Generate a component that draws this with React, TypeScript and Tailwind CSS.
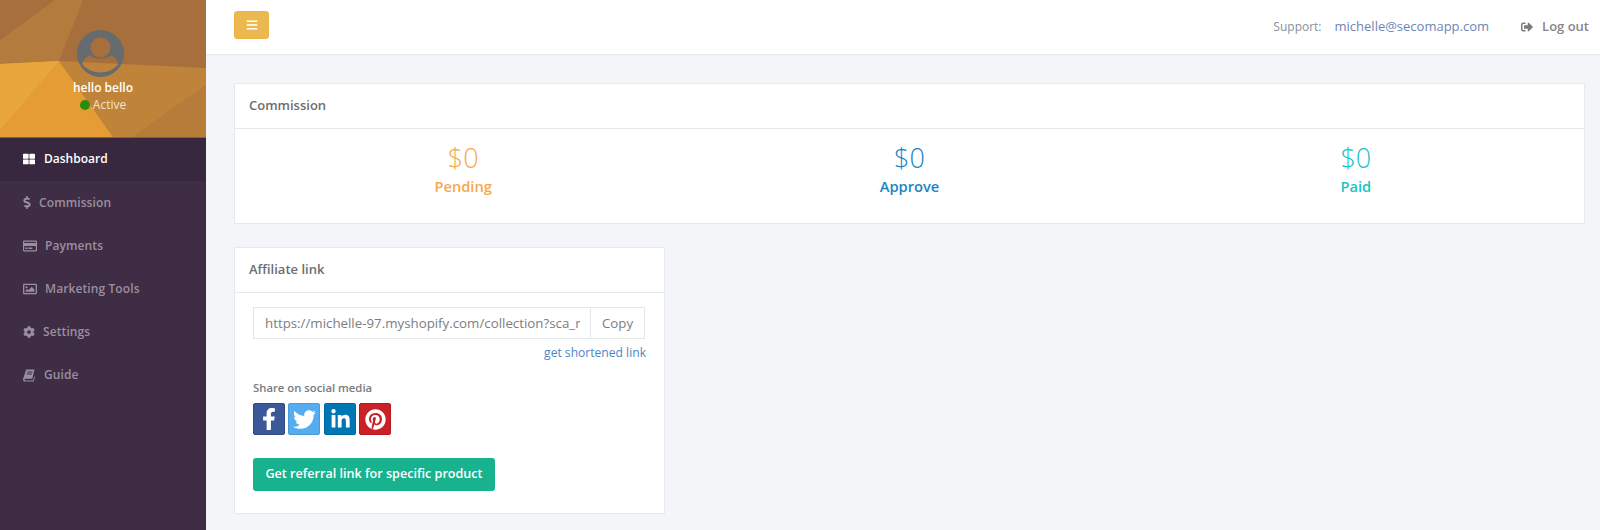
import { FaBars, FaCog, FaDollarSign, FaFacebookF, FaLinkedinIn, FaPinterest, FaRegCreditCard, FaRegImage, FaSignOutAlt, FaThLarge, FaTwitter } from 'react-icons/fa';

const BookIcon = () => (
  <svg width="12" height="13" viewBox="0 0 12 13" fill="currentColor">
    <path fillRule="evenodd" d="M3.200 0.500H11.500L9.300 9.700H2.400C1.800 9.700 1.500 10.100 1.500 10.600C1.500 11.100 1.800 11.400 2.400 11.400H10.200L11.200 7.200L12 7.800L10.800 12.600H2C0.900 12.600 0 11.600 0 10.400C0 10 0.100 9.600 0.300 9.200ZM4.300 2.600V3.500H9.300L9.500 2.600ZM3.800 4.600L3.600 5.500H8.800L9 4.600Z" />
  </svg>
);

const menu = [
  { label: 'Commission', icon: <FaDollarSign className="w-[8px] h-[13px]" />, gap: 'gap-[8px]' },
  { label: 'Payments', icon: <FaRegCreditCard className="w-[14px] h-[14px]" />, gap: 'gap-[8px]' },
  { label: 'Marketing Tools', icon: <FaRegImage className="w-[14px] h-[14px]" />, gap: 'gap-[8px]' },
  { label: 'Settings', icon: <FaCog className="w-[12px] h-[12px]" />, gap: 'gap-[8px]' },
  { label: 'Guide', icon: <BookIcon />, gap: 'gap-[9px]' },
];

const stats = [
  { value: '$0', label: 'Pending', color: 'text-[#f8a84c]' },
  { value: '$0', label: 'Approve', color: 'text-[#1c84c6]' },
  { value: '$0', label: 'Paid', color: 'text-[#1ac4c4]' },
];

const Hero = () => (
  <div className="relative h-[138px] shrink-0 border-b border-[#8a6038] overflow-hidden">
    <svg className="absolute inset-0" width="206" height="138" viewBox="0 0 206 138">
      <rect width="206" height="138" fill="#a66f3c" />
      <polygon points="0,40 55,0 83,0 59,61 0,64" fill="#b37c3c" />
      <polygon points="59,61 206,68 206,85 133,137 113,137" fill="#c0833a" />
      <polygon points="133,137 206,85 206,137" fill="#b67c3a" />
      <polygon points="0,64 59,61 113,137 0,137" fill="#e59c35" />
      <polygon points="0,64 59,61 0,130" fill="#e8a63d" />
    </svg>
    <div className="relative flex flex-col items-center pt-[30px]">
      <svg className="mr-[5px]" width="47" height="47" viewBox="0 0 47 47">
        <path
          fillRule="evenodd"
          fill="#666b70"
          d="M23.500 0a23.500 23.500 0 1 0 0 47a23.500 23.500 0 1 0 0-47ZM23.500 7.500a10 10 0 1 1 0 20a10 10 0 1 1 0-20ZM13 25.500c3 4 18 4 21 0c4 1 6.500 4 7 9c-4 5-11 8-17.500 8c-7 0-14-3-18-8c.5-5 3.500-8 7.500-9Z"
        />
      </svg>
      <div className="mt-[2px] text-[12px] leading-[17px] font-semibold text-white">hello bello</div>
      <div className="flex items-center gap-[3px] text-[12px] leading-[17px] text-[#f0e4d6]">
        <span className="w-[10px] h-[10px] rounded-full bg-[#2a8c0f]" />
        Active
      </div>
    </div>
  </div>
);

const Sidebar = () => (
  <aside className="w-[206px] shrink-0 flex flex-col bg-[#3f2d45]">
    <Hero />
    <div className="h-[43px] pl-[23px] pb-[2px] flex items-center gap-[9px] bg-[#38283f] text-white text-[12px] font-semibold">
      <FaThLarge className="w-[12px] h-[12px]" />
      Dashboard
    </div>
    {menu.map((item) => (
      <div key={item.label} className={`h-[43.200px] pl-[23px] flex items-center ${item.gap} text-[#9a8fa0] text-[12px] font-semibold tracking-[0.1px]`}>
        {item.icon}
        {item.label}
      </div>
    ))}
  </aside>
);

const Topbar = () => (
  <header className="h-[55px] shrink-0 bg-white border-b border-[#e7eaec] flex items-center justify-between pl-[28px] pr-[11px]">
    <button className="w-[35px] h-[28px] mb-[4px] flex items-center justify-center rounded-[3px] bg-[#ecb951] border border-[#ebb445] text-white">
      <FaBars className="w-[12px] h-[12px]" />
    </button>
    <div className="flex items-center text-[12px]">
      <span className="text-[#8a9099]">Support:</span>
      <span className="ml-[13px] text-[13px] text-[#6c85b5]">michelle@secomapp.com</span>
      <FaSignOutAlt className="ml-[32px] w-[12px] h-[12px] text-[#7f7880]" />
      <span className="ml-[9px] text-[13px] font-semibold text-[#8b8389]">Log out</span>
    </div>
  </header>
);

const Affiliate = () => (
  <section className="w-[431px] h-[267px] mt-[23px] bg-white border border-[#e7eaec]">
    <div className="h-[45px] pl-[14px] flex items-center border-b border-[#e7eaec] text-[13px] font-semibold text-[#6b6e70]">Affiliate link</div>
    <div className="pl-[18px] pt-[14px]">
      <div className="flex h-[32px] w-[392px] border border-[#e5e6e7] text-[13.300px] text-[#7b7e80]">
        <div className="w-[336px] pl-[11px] pr-[10px] leading-[30px]">
          <div className="overflow-hidden whitespace-nowrap">https://michelle-97.myshopify.com/collection?sca_ref=12</div>
        </div>
        <div className="flex-1 border-l border-[#e5e6e7] text-center leading-[30px]">Copy</div>
      </div>
      <div className="w-[393px] text-right text-[12.100px] leading-[16px] mt-[6px] text-[#4a86c5]">get shortened link</div>
      <div className="mt-[19px] text-[11.300px] leading-[15px] font-semibold text-[#777a7c]">Share on social media</div>
      <div className="mt-[8px] flex gap-[3px]">
        <div className="w-[32px] h-[32px] rounded-[2px] bg-[#3b5998] border border-[#2f4a80] flex items-center justify-center text-white"><FaFacebookF className="w-[20px] h-[22px]" /></div>
        <div className="w-[32px] h-[32px] rounded-[2px] bg-[#55acee] border border-[#4a9ad8] flex items-center justify-center text-white"><FaTwitter className="w-[23px] h-[23px]" /></div>
        <div className="w-[32px] h-[32px] ml-[1px] rounded-[2px] bg-[#0077b5] border border-[#00689e] flex items-center justify-center text-white"><FaLinkedinIn className="w-[21px] h-[21px]" /></div>
        <div className="w-[32px] h-[32px] rounded-[2px] bg-[#cb2027] border border-[#b31b21] flex items-center justify-center text-white"><FaPinterest className="w-[21px] h-[21px]" /></div>
      </div>
      <button className="mt-[23px] h-[33px] w-[242px] rounded-[3px] bg-[#18b28f] text-white text-[12.600px] font-semibold">Get referral link for specific product</button>
    </div>
  </section>
);

export default function App() {
  return (
    <div className="w-[1600px] h-[530px] flex overflow-hidden bg-[#f4f5f9] font-['Open_Sans',sans-serif]">
      <Sidebar />
      <main className="flex-1 flex flex-col min-w-0">
        <Topbar />
        <div className="pl-[28px] pr-[15px] pt-[28px]">
          <section className="h-[141px] bg-white border border-[#e7eaec]">
            <div className="h-[45px] pl-[14px] flex items-center border-b border-[#e7eaec] text-[13px] font-semibold text-[#6b6e70]">Commission</div>
            <div className="flex pt-[11px] px-[5px]">
              {stats.map((s) => (
                <div key={s.label} className={`flex-1 text-center ${s.color}`}>
                  <div className="text-[27px] leading-[36px] font-light">{s.value}</div>
                  <div className="text-[14.700px] leading-[20px] font-semibold">{s.label}</div>
                </div>
              ))}
            </div>
          </section>
          <Affiliate />
        </div>
      </main>
    </div>
  );
}
